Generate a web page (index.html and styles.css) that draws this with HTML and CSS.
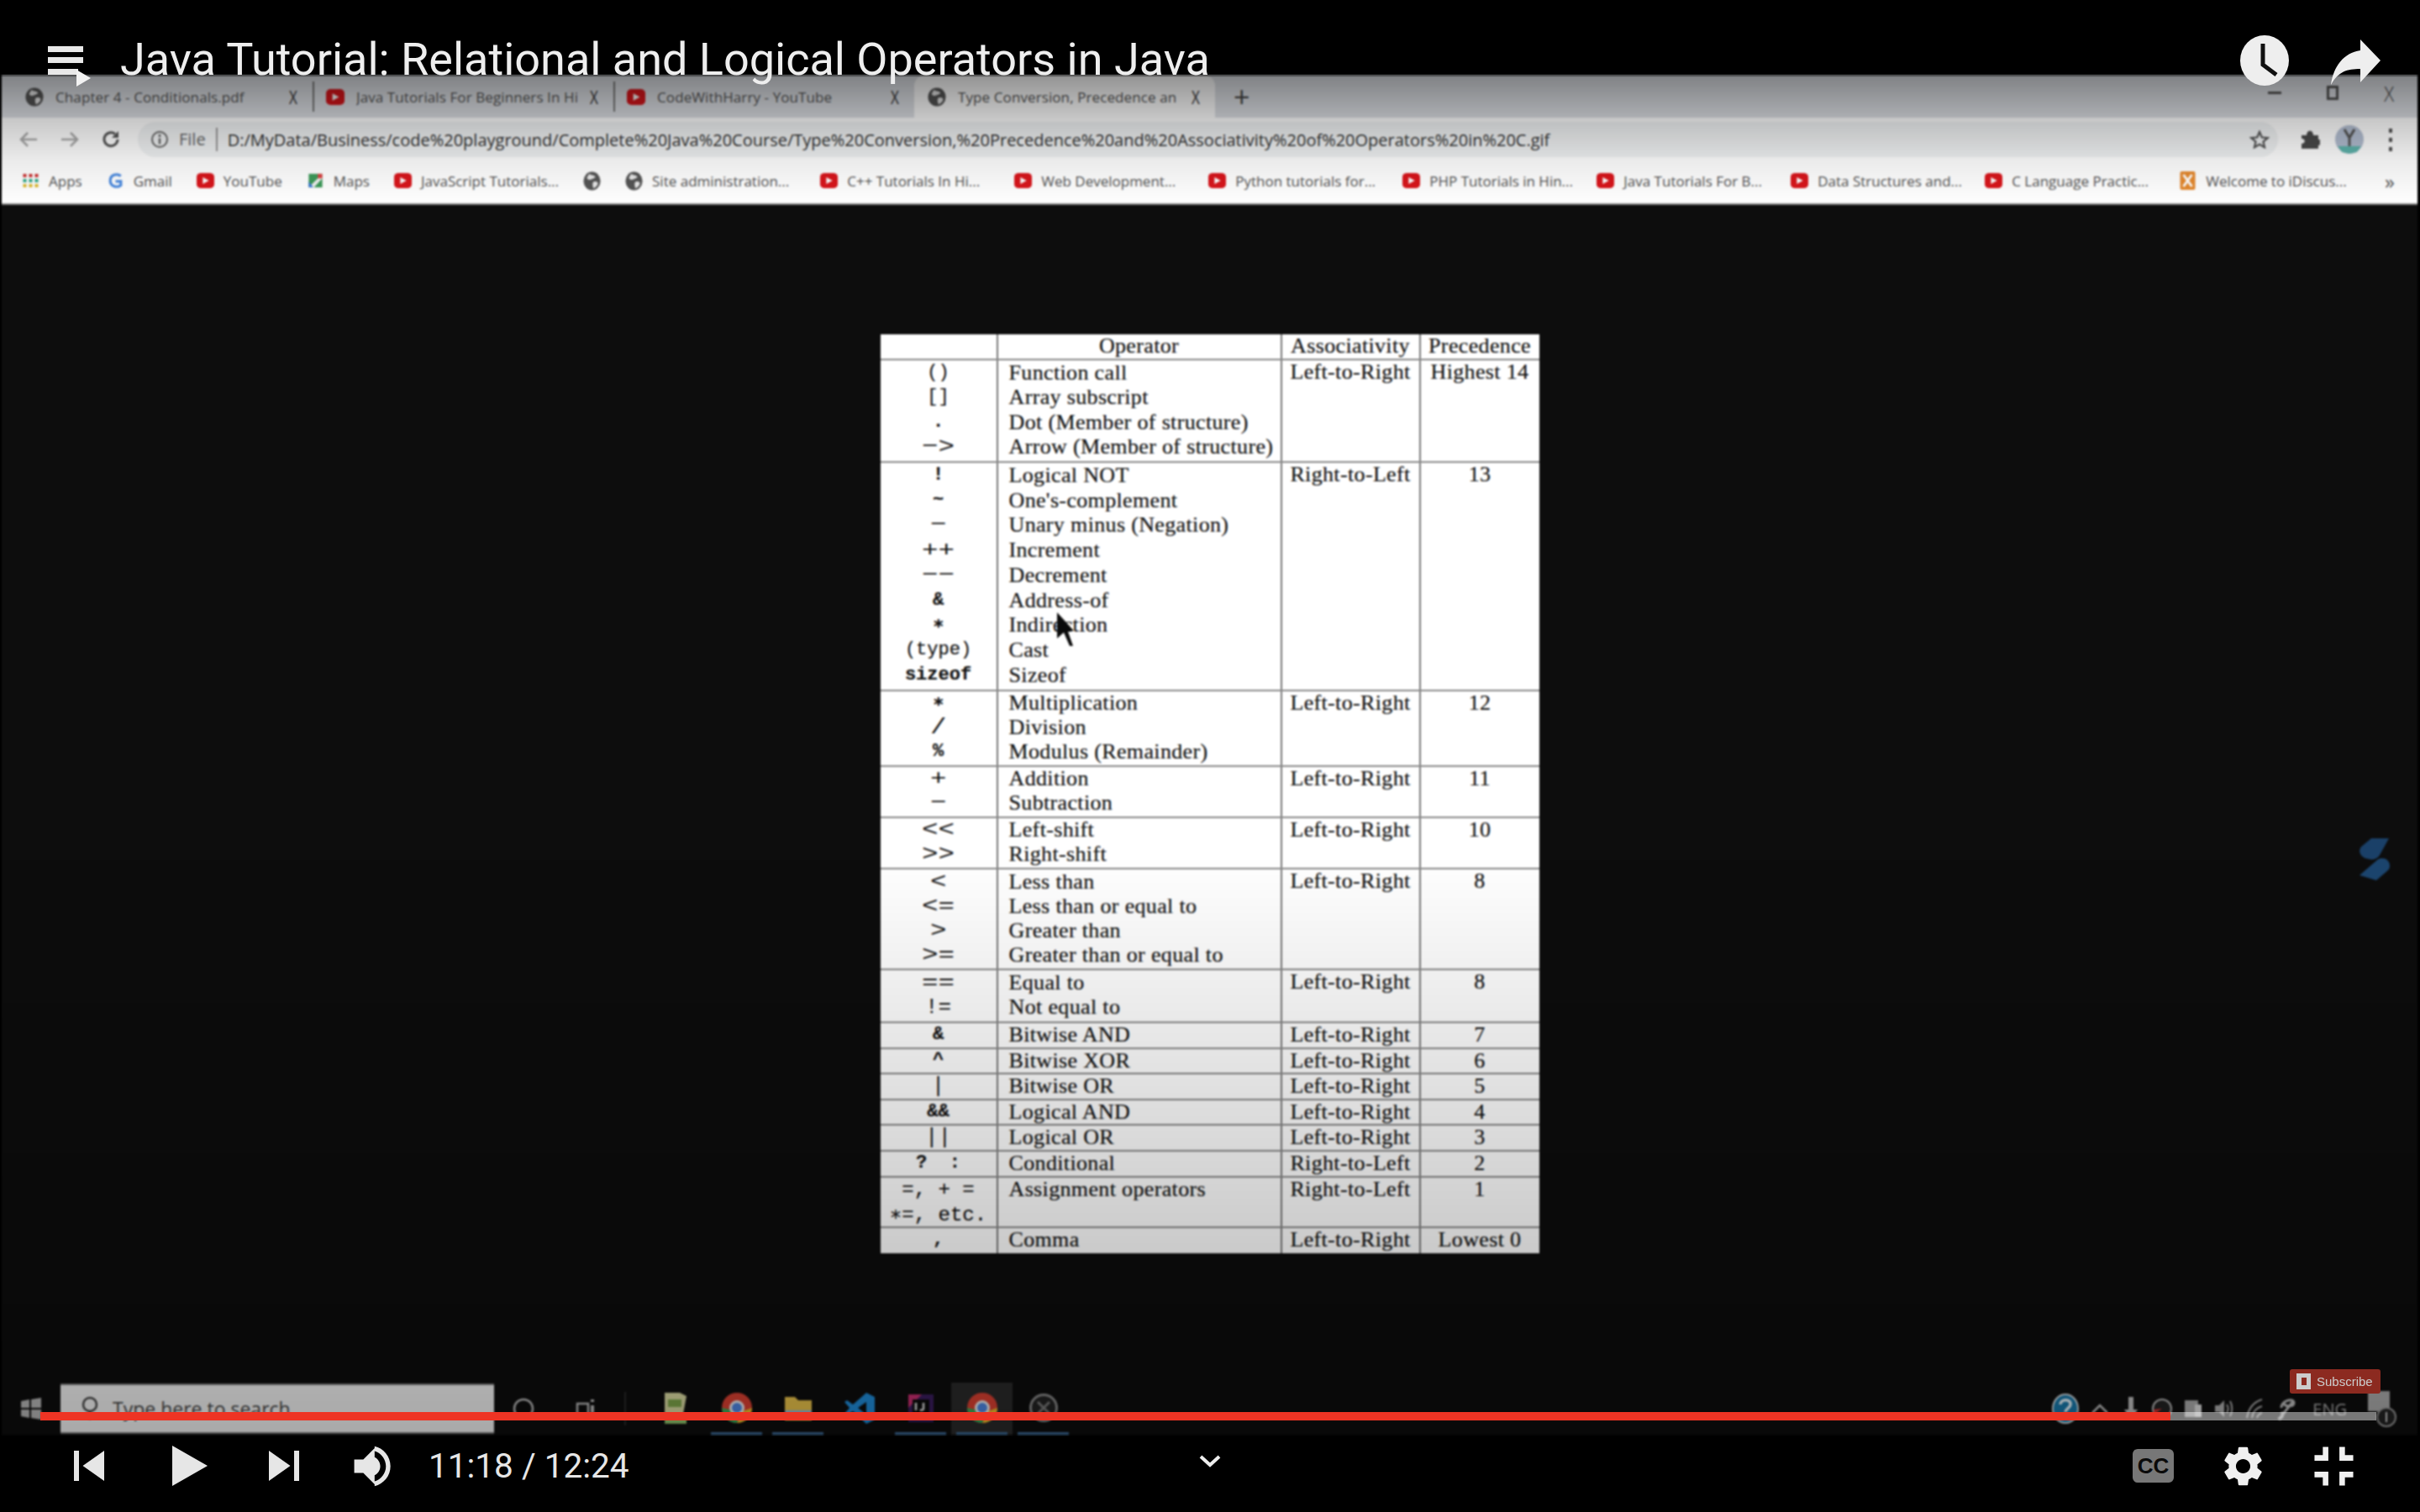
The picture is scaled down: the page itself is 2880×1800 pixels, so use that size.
FILE: index.html
```html
<!DOCTYPE html>
<html lang="en">
<head>
<meta charset="utf-8">
<title>Java Tutorial: Relational and Logical Operators in Java</title>
<link rel="stylesheet" href="styles.css">
</head>
<body>
<svg class="defs" width="0" height="0" aria-hidden="true">
  <symbol id="yt" viewBox="0 0 20 20" preserveAspectRatio="none"><rect x="0" y="0" width="20" height="20" rx="5" fill="#d9161c"/><path d="M7 5.500l7 4.500-7 4.500z" fill="#fff"/></symbol>
  <symbol id="globe" viewBox="0 0 24 24" preserveAspectRatio="none"><circle cx="12" cy="12" r="11.500" fill="#555"/><path d="M8 3c3 2 6 1 8 3s-3 3-5 4-5 0-6-2zM14 13c3-1 6 0 6 2s-3 5-6 6c-1-3-2-6 0-8z" fill="#e8e8e8"/></symbol>
</svg>
<main class="player">
  <div class="top-gap"></div>
  <section class="video">
    <div class="browser">
      <div class="tabs">
        <div class="tab"><svg class="fav"><use href="#globe"/></svg><span class="tab-text">Chapter 4 - Conditionals.pdf</span><span class="tab-x">X</span></div>
        <div class="tab sep"><svg class="fav fav-yt"><use href="#yt"/></svg><span class="tab-text">Java Tutorials For Beginners In Hi</span><span class="tab-x">X</span></div>
        <div class="tab sep"><svg class="fav fav-yt"><use href="#yt"/></svg><span class="tab-text">CodeWithHarry - YouTube</span><span class="tab-x">X</span></div>
        <div class="tab active"><svg class="fav"><use href="#globe"/></svg><span class="tab-text">Type Conversion, Precedence an</span><span class="tab-x">X</span></div>
        <span class="new-tab">+</span>
        <div class="win-btns"><span class="win-min"></span><span class="win-max"></span><span class="win-x">X</span></div>
      </div>
      <div class="toolbar">
        <svg class="nav-ico" viewBox="0 0 24 20"><path d="M22 10H4M11 2l-8 8 8 8" fill="none" stroke="#aaa" stroke-width="2.500"/></svg>
        <svg class="nav-ico" viewBox="0 0 24 20"><path d="M2 10h18M13 2l8 8-8 8" fill="none" stroke="#aaa" stroke-width="2.500"/></svg>
        <svg class="nav-ico" viewBox="0 0 24 20"><path d="M20 10a8 8 0 1 1-3-6.500" fill="none" stroke="#555" stroke-width="3"/><path d="M21 0v8h-8z" fill="#555"/></svg>
        <div class="omni">
          <svg class="info" viewBox="0 0 22 20"><circle cx="11" cy="10" r="9" fill="none" stroke="#666" stroke-width="2"/><path d="M11 8.500v7M11 4v3" stroke="#666" stroke-width="2.500"/></svg>
          <span class="file">File</span>
          <span class="url">D:/MyData/Business/code%20playground/Complete%20Java%20Course/Type%20Conversion,%20Precedence%20and%20Associativity%20of%20Operators%20in%20C.gif</span>
          <svg class="star" viewBox="0 0 24 22"><path d="M12 2l2.800 6.500 7 .6-5.300 4.500 1.600 6.900-6.100-3.600-6.100 3.600 1.600-6.900L2.200 9.100l7-.6z" fill="none" stroke="#555" stroke-width="2.200"/></svg>
        </div>
        <svg class="puzzle" viewBox="0 0 24 22"><path d="M2 6h6c0-7 8-7 8 0h6v5c5 0 5 7 0 7v4H2v-6c5 0 5-6 0-6z" fill="#4a4a4a"/></svg>
        <svg class="avatar" viewBox="0 0 34 34"><circle cx="17" cy="17" r="17" fill="#b4bfd2"/><path d="M3 25h28l-5 7-9 2-9-2z" fill="#5fb4ac"/><path d="M11 5l6 10 6-10M17 15v10" stroke="#555" stroke-width="3" fill="none"/></svg>
        <span class="dots"><i></i><i></i><i></i></span>
      </div>
      <div class="bookmarks">
        <div class="bm"><svg class="bm-ico" viewBox="0 0 20 18"><path d="M1 1h4v4H1zM8 1h4v4H8zM15 1h4v4h-4z" fill="#c33"/><path d="M1 7h4v4H1zM8 7h4v4H8zM15 7h4v4h-4z" fill="#3a8"/><path d="M1 13h4v4H1zM8 13h4v4H8zM15 13h4v4h-4z" fill="#db3"/></svg><span>Apps</span></div>
        <div class="bm"><svg class="bm-ico" viewBox="0 0 20 20"><path d="M17 4C12 0 3 2 3 10s9 10 14 6v-5h-7" fill="none" stroke="#4a8ae0" stroke-width="3.500"/></svg><span>Gmail</span></div>
        <div class="bm"><svg class="bm-ico"><use href="#yt"/></svg><span>YouTube</span></div>
        <div class="bm"><svg class="bm-ico" viewBox="0 0 20 20"><path d="M1 1h18v18H1z" fill="#3d9a5a"/><path d="M1 19L19 1v6L8 19z" fill="#f0f0f0"/><path d="M13 1h6v6h-6z" fill="#d44"/><path d="M1 11l6 8H1z" fill="#3c78d8"/></svg><span>Maps</span></div>
        <div class="bm"><svg class="bm-ico"><use href="#yt"/></svg><span>JavaScript Tutorials...</span></div>
        <div class="bm"><svg class="bm-ico bm-globe"><use href="#globe"/></svg></div>
        <div class="bm bm-site"><svg class="bm-ico bm-globe"><use href="#globe"/></svg><span>Site administration...</span></div>
        <div class="bm bm-w"><svg class="bm-ico"><use href="#yt"/></svg><span>C++ Tutorials In Hi...</span></div>
        <div class="bm bm-w"><svg class="bm-ico"><use href="#yt"/></svg><span>Web Development...</span></div>
        <div class="bm bm-w"><svg class="bm-ico"><use href="#yt"/></svg><span>Python tutorials for...</span></div>
        <div class="bm bm-w"><svg class="bm-ico"><use href="#yt"/></svg><span>PHP Tutorials in Hin...</span></div>
        <div class="bm bm-w"><svg class="bm-ico"><use href="#yt"/></svg><span>Java Tutorials For B...</span></div>
        <div class="bm bm-w"><svg class="bm-ico"><use href="#yt"/></svg><span>Data Structures and...</span></div>
        <div class="bm bm-w"><svg class="bm-ico"><use href="#yt"/></svg><span>C Language Practic...</span></div>
        <div class="bm"><svg class="bm-ico bm-x" viewBox="0 0 20 24"><rect x="1" y="1" width="18" height="22" rx="2" fill="#e58a30"/><path d="M5 5l10 14M15 5L5 19" stroke="#fff" stroke-width="3"/></svg><span>Welcome to iDiscus...</span></div>
        <span class="more">»</span>
      </div>
    </div>
    <div class="page">
      <div class="optable">
        <div class="grp"><div class="c"></div><div class="c c-mid">Operator</div><div class="c c-mid">Associativity</div><div class="c c-mid">Precedence</div></div>
        <div class="grp"><div class="c c-op"><span>()</span><span>[]</span><span class="b">.</span><span class="big">−&gt;</span></div><div class="c"><span>Function call</span><span>Array subscript</span><span>Dot (Member of structure)</span><span>Arrow (Member of structure)</span></div><div class="c c-top c-mid">Left-to-Right</div><div class="c c-top c-mid">Highest 14</div></div>
        <div class="grp"><div class="c c-op"><span class="b">!</span><span class="b">~</span><span class="big">−</span><span class="big">++</span><span class="big">−−</span><span class="b">&amp;</span><span class="b">∗</span><span>(type)</span><span class="b">sizeof</span></div><div class="c"><span>Logical NOT</span><span>One's-complement</span><span>Unary minus (Negation)</span><span>Increment</span><span>Decrement</span><span>Address-of</span><span>Indirection</span><span>Cast</span><span>Sizeof</span></div><div class="c c-top c-mid">Right-to-Left</div><div class="c c-top c-mid">13</div></div>
        <div class="grp"><div class="c c-op"><span class="b">∗</span><span class="big">/</span><span class="b">%</span></div><div class="c"><span>Multiplication</span><span>Division</span><span>Modulus (Remainder)</span></div><div class="c c-top c-mid">Left-to-Right</div><div class="c c-top c-mid">12</div></div>
        <div class="grp"><div class="c c-op"><span class="big">+</span><span class="big">−</span></div><div class="c"><span>Addition</span><span>Subtraction</span></div><div class="c c-top c-mid">Left-to-Right</div><div class="c c-top c-mid">11</div></div>
        <div class="grp"><div class="c c-op"><span class="big">&lt;&lt;</span><span class="big">&gt;&gt;</span></div><div class="c"><span>Left-shift</span><span>Right-shift</span></div><div class="c c-top c-mid">Left-to-Right</div><div class="c c-top c-mid">10</div></div>
        <div class="grp"><div class="c c-op"><span class="big">&lt;</span><span class="big">&lt;=</span><span class="big">&gt;</span><span class="big">&gt;=</span></div><div class="c"><span>Less than</span><span>Less than or equal to</span><span>Greater than</span><span>Greater than or equal to</span></div><div class="c c-top c-mid">Left-to-Right</div><div class="c c-top c-mid">8</div></div>
        <div class="grp"><div class="c c-op"><span class="big">==</span><span class="mid">!=</span></div><div class="c"><span>Equal to</span><span>Not equal to</span></div><div class="c c-top c-mid">Left-to-Right</div><div class="c c-top c-mid">8</div></div>
        <div class="grp"><div class="c c-op"><span class="b">&amp;</span></div><div class="c"><span>Bitwise AND</span></div><div class="c c-top c-mid">Left-to-Right</div><div class="c c-top c-mid">7</div></div>
        <div class="grp"><div class="c c-op"><span class="b">^</span></div><div class="c"><span>Bitwise XOR</span></div><div class="c c-top c-mid">Left-to-Right</div><div class="c c-top c-mid">6</div></div>
        <div class="grp"><div class="c c-op"><span class="mid">|</span></div><div class="c"><span>Bitwise OR</span></div><div class="c c-top c-mid">Left-to-Right</div><div class="c c-top c-mid">5</div></div>
        <div class="grp"><div class="c c-op"><span class="b">&amp;&amp;</span></div><div class="c"><span>Logical AND</span></div><div class="c c-top c-mid">Left-to-Right</div><div class="c c-top c-mid">4</div></div>
        <div class="grp"><div class="c c-op"><span class="mid">||</span></div><div class="c"><span>Logical OR</span></div><div class="c c-top c-mid">Left-to-Right</div><div class="c c-top c-mid">3</div></div>
        <div class="grp"><div class="c c-op"><span class="b">?&nbsp;&nbsp;:</span></div><div class="c"><span>Conditional</span></div><div class="c c-top c-mid">Right-to-Left</div><div class="c c-top c-mid">2</div></div>
        <div class="grp"><div class="c c-op"><span class="wide">=, + =</span><span class="wide">∗=, etc.</span></div><div class="c c-top"><span>Assignment operators</span></div><div class="c c-top c-mid">Right-to-Left</div><div class="c c-top c-mid">1</div></div>
        <div class="grp"><div class="c c-op"><span class="b">,</span></div><div class="c"><span>Comma</span></div><div class="c c-top c-mid">Left-to-Right</div><div class="c c-top c-mid">Lowest 0</div></div>
      </div>
      <svg class="cursor" viewBox="0 0 20 40"><path d="M0 0l20 22-7 1 6 17-4 0-7-16-8 7z" fill="#0a0a0a"/></svg>
      <svg class="ext-logo" viewBox="0 0 36 50"><path d="M14 0h21L24 20c-4 6-10 6-16 4C1 22-2 15 2 10z" fill="#1d4a78"/><path d="M22 25c6-3 14 0 14 8 0 2-1 4-2 5L20 50 0 44z" fill="#1f4f80"/></svg>
    </div>
    <div class="taskbar">
      <svg class="winlogo" viewBox="0 0 26 26"><path d="M1 4l10-2v10H1zM13 2l12-2v12H13zM1 14h10v10L1 22zM13 14h12v12l-12-2z" fill="#b5b5b5"/></svg>
      <div class="search"><svg class="search-ico" viewBox="0 0 22 30"><circle cx="11" cy="10" r="8" fill="none" stroke="#444" stroke-width="2.500"/><path d="M11 18v10" stroke="#444" stroke-width="2.500"/></svg><span>Type here to search</span></div>
      <svg class="cortana" viewBox="0 0 26 26"><circle cx="13" cy="13" r="11" fill="none" stroke="#b8b8b8" stroke-width="2.500"/></svg>
      <svg class="taskview" viewBox="0 0 28 30"><path d="M4 9h13v13H4z" fill="none" stroke="#b8b8b8" stroke-width="2.500"/><path d="M22 4v3M22 11v9M22 24v3" stroke="#b8b8b8" stroke-width="4"/></svg>
      <span class="tb-div"></span>
      <div class="tb-app"><svg class="a-note" viewBox="0 0 30 38"><path d="M2 1h18l8 4-6 32H2z" fill="#d8d8a0"/><path d="M6 9h16v9H6z" fill="#7da54a"/><path d="M2 30h26v8H2z" fill="#8fbf6a"/></svg></div>
      <div class="tb-app open"><svg class="a-chrome" viewBox="0 0 36 36"><circle cx="18" cy="18" r="18" fill="#d94032"/><path d="M0 18c0 10 8 18 18 18l4-13z" fill="#3ba856"/><path d="M36 18c0 10-8 18-18 18l7-14z" fill="#eebc2c"/><circle cx="18" cy="18" r="7.500" fill="#4d85e0" stroke="#eee" stroke-width="3"/></svg></div>
      <div class="tb-app open"><svg class="a-folder" viewBox="0 0 32 30"><path d="M0 2h12l4 4h16v24H0z" fill="#e6c04a"/><path d="M0 18h32v7H0z" fill="#8fb7d8"/></svg></div>
      <div class="tb-app"><svg class="a-code" viewBox="0 0 36 37"><path d="M26 0l10 5v27l-10 5L10 22l-7 5-3-2 6-7-6-7 3-2 7 5zm0 11l-10 7 10 8z" fill="#1f8ad6"/></svg></div>
      <div class="tb-app open"><svg class="a-idea" viewBox="0 0 30 33"><rect width="30" height="33" fill="#3a1d5c"/><path d="M0 0h16L0 16z" fill="#c52d6e"/><path d="M5 6h20v22H5z" fill="#0b0b0b"/><path d="M9 10v9M18 10v7c0 2-3 2-4 1" stroke="#ddd" stroke-width="2.500" fill="none"/></svg></div>
      <div class="tb-app open active"><svg class="a-chrome" viewBox="0 0 36 36"><circle cx="18" cy="18" r="18" fill="#d94032"/><path d="M0 18c0 10 8 18 18 18l4-13z" fill="#3ba856"/><path d="M36 18c0 10-8 18-18 18l7-14z" fill="#eebc2c"/><circle cx="18" cy="18" r="7.500" fill="#4d85e0" stroke="#eee" stroke-width="3"/></svg></div>
      <div class="tb-app open"><svg class="a-obs" viewBox="0 0 34 34"><circle cx="17" cy="17" r="15.500" fill="#222" stroke="#888" stroke-width="3"/><path d="M10 10l14 14M24 10L10 24" stroke="#777" stroke-width="3"/></svg></div>
      <div class="tray">
        <svg class="tray-help" viewBox="0 0 32 36"><ellipse cx="16" cy="18" rx="15" ry="17" fill="#1877a8" stroke="#cfd8dc" stroke-width="2"/><path d="M10 13c0-7 13-7 12 0 0 4-6 5-6 9M16 25v3" fill="none" stroke="#e8f4fa" stroke-width="3.500"/></svg>
        <svg class="tray-ico" viewBox="0 0 24 30"><path d="M3 20l9-9 9 9" fill="none" stroke="#bbb" stroke-width="2.500"/></svg>
        <svg class="tray-ico" viewBox="0 0 24 30"><path d="M9 1h6v15h5L12 28 4 16h5z" fill="#bbb"/></svg>
        <svg class="tray-ico" viewBox="0 0 24 30"><circle cx="12" cy="15" r="11" fill="#222" stroke="#bbb" stroke-width="2"/><path d="M12 15L2 22v-6z" fill="#c33"/></svg>
        <svg class="tray-ico" viewBox="0 0 24 30"><path d="M2 5h16v20H2z" fill="#aaa"/><path d="M14 10h8v15h-8z" fill="#ddd"/></svg>
        <svg class="tray-ico" viewBox="0 0 24 30"><path d="M1 11h5l6-6v20l-6-6H1z" fill="#aaa"/><path d="M15 10c2 3 2 7 0 10M19 6c3 5 3 13 0 18" fill="none" stroke="#aaa" stroke-width="2"/></svg>
        <svg class="tray-ico" viewBox="0 0 24 30"><path d="M2 26C4 14 10 7 20 4M8 26c1-8 5-12 12-14M14 26c1-4 3-5 6-6" fill="none" stroke="#aaa" stroke-width="2"/></svg>
        <svg class="tray-ico" viewBox="0 0 24 30"><path d="M3 28L20 6M6 14c0-8 14-13 15-6 0 5-10 5-12 1M6 19c4 6-2 9-3 6" fill="none" stroke="#bbb" stroke-width="3"/></svg>
        <span class="lang">ENG</span>
        <svg class="tray-note" viewBox="0 0 36 46"><path d="M2 2h26v24H2z" fill="#aaa"/><circle cx="24" cy="33" r="11" fill="#222" stroke="#999" stroke-width="2"/><path d="M24 27v12" stroke="#ccc" stroke-width="2"/></svg>
      </div>
    </div>
  </section>
  <footer class="controls">
    <button class="ctl ctl-prev"><svg viewBox="0 0 36 36"><path d="M12 12h2v12h-2zm3.500 6 8.500 6V12z"/></svg></button>
    <button class="ctl ctl-play"><svg viewBox="0 0 36 36"><path d="M12 26 26 18 12 10z"/></svg></button>
    <button class="ctl ctl-next"><svg viewBox="0 0 36 36"><path d="M12 24l8.500-6L12 12v12zm10-12v12h2V12h-2z"/></svg></button>
    <button class="ctl ctl-vol"><svg viewBox="0 0 36 36"><path d="M8 21h4l5 5V10l-5 5H8v6zm11.500-3c0-1.770-1.020-3.290-2.500-4.030v8.050c1.480-.73 2.500-2.250 2.500-4.020zM17 9.230v2.060c2.890.86 5 3.540 5 6.710s-2.110 5.850-5 6.710v2.060c4.010-.91 7-4.490 7-8.770 0-4.280-2.990-7.860-7-8.770z"/></svg></button>
    <span class="time">11:18 / 12:24</span>
    <span class="spacer"></span>
    <span class="cc">CC</span>
    <button class="ctl ctl-gear"><svg viewBox="0 0 24 24"><path d="M19.140 12.940c.04-.3.06-.61.06-.94 0-.32-.02-.64-.07-.94l2.030-1.580c.18-.14.23-.41.12-.61l-1.920-3.320c-.12-.22-.37-.29-.59-.22l-2.390.96c-.5-.38-1.030-.7-1.620-.94l-.36-2.540c-.04-.24-.24-.41-.48-.41h-3.840c-.24 0-.43.17-.47.41l-.36 2.540c-.59.24-1.130.57-1.620.94l-2.390-.96c-.22-.08-.47 0-.59.22L2.740 8.870c-.12.21-.08.47.12.61l2.030 1.580c-.05.3-.09.63-.09.94s.02.64.07.94l-2.030 1.580c-.18.14-.23.41-.12.61l1.920 3.320c.12.22.37.29.59.22l2.390-.96c.5.38 1.030.7 1.620.94l.36 2.540c.05.24.24.41.48.41h3.840c.24 0 .44-.17.47-.41l.36-2.540c.59-.24 1.130-.56 1.620-.94l2.390.96c.22.08.47 0 .59-.22l1.920-3.320c.12-.22.07-.47-.12-.61l-2.010-1.580zM12 15.600c-1.980 0-3.600-1.620-3.600-3.600s1.620-3.600 3.600-3.600 3.600 1.620 3.600 3.600-1.620 3.600-3.600 3.600z"/></svg></button>
    <button class="ctl ctl-fs"><svg viewBox="0 0 24 24"><path d="M5 16h3v3h2v-5H5v2zm3-8H5v2h5V5H8v3zm6 11h2v-3h3v-2h-5v5zm2-11V5h-2v5h5V8h-3z"/></svg></button>
  </footer>

  <div class="scrim-top"></div>
  <div class="scrim-bottom"></div>
  <div class="subscribe"><span class="sub-ico"></span>Subscribe</div>
  <div class="progress"><div class="progress-played"></div></div>
  <svg class="chevron" viewBox="0 0 28 16"><path d="M3 3l11 10L25 3" fill="none" stroke="#eee" stroke-width="4"/></svg>
  <svg class="menu" viewBox="0 0 52 50"><path d="M0 0h42v7H0zM0 13h42v7H0zM0 27h36v7H0z" fill="#e8e8e8"/><path d="M34 28l17 10-17 10z" fill="#f2f2f2"/></svg>
  <h1 class="title">Java Tutorial: Relational and Logical Operators in Java</h1>
  <svg class="clock" viewBox="0 0 58 60"><ellipse cx="29" cy="30" rx="29" ry="30" fill="#eee"/><path d="M27 10v25l16 12" fill="none" stroke="#111" stroke-width="5"/></svg>
  <svg class="share" viewBox="0 0 60 56"><path d="M36 0l24 25-24 26V35C20 35 10 38 1 54 4 32 16 16 36 13z" fill="#eee"/></svg>
</main>
</body>
</html>
```
FILE: styles.css
```css
* { box-sizing: border-box; }
html, body { margin: 0; padding: 0; background: #000; }
body { width: 2880px; height: 1800px; overflow: hidden; }
.defs { position: absolute; }
.player { position: relative; width: 2880px; height: 1800px; display: flex; flex-direction: column; background: #000; overflow: hidden; }
.top-gap { height: 90px; flex: none; }

.video { height: 1618px; flex: none; margin: 0 3px 0 2px; background: #0d0d0d; display: flex; flex-direction: column; filter: blur(.8px); font-family: "Open Sans", "Liberation Sans", sans-serif; }

.browser { flex: none; height: 154px; background: #fff; border-bottom: 2px solid #888; display: flex; flex-direction: column; }
.tabs { height: 50px; flex: none; background: #dee1e6; display: flex; align-items: center; padding-left: 12px; color: #555; font-size: 17px; }
.tab { width: 358px; height: 50px; display: flex; align-items: center; padding-left: 16px; flex: none; }
.tab.sep { height: 36px; border-left: 2px solid #777; padding-left: 14px; }
.tab.active { background: #fff; border-radius: 12px 12px 0 0; }
.fav { width: 22px; height: 23px; flex: none; margin-right: 14px; }
.fav-yt { height: 19px; }
.tab-text { width: 263px; white-space: nowrap; overflow: hidden; letter-spacing: .1px; }
.tab-x { margin-left: 15px; font-size: 17px; color: #333; transform: scaleY(1.3); }
.new-tab { font-size: 34px; color: #444; margin-left: 22px; line-height: 1; }
.win-btns { margin-left: auto; display: flex; align-items: center; gap: 54px; padding: 0 28px 10px 0; color: #444; }
.win-min { width: 16px; height: 3px; background: #555; }
.win-max { width: 14px; height: 17px; border: 3px solid #555; }
.win-x { font-size: 22px; font-weight: 300; transform: scaleY(1.2); }

.toolbar { height: 52px; flex: none; display: flex; align-items: center; padding-left: 20px; }
.nav-ico { width: 24px; height: 20px; flex: none; margin-right: 25px; }
.nav-ico:nth-child(3) { margin-right: 20px; }
.omni { width: 2547px; height: 42px; background: #f1f3f4; border-radius: 21px; display: flex; align-items: center; padding-left: 15px; flex: none; }
.info { width: 22px; height: 20px; flex: none; margin-right: 12px; }
.file { color: #666; font-size: 20px; padding-right: 12px; border-right: 2px solid #999; margin-right: 12px; line-height: 28px; }
.url { color: #333; font-size: 20px; white-space: nowrap; }
.star { width: 24px; height: 22px; margin-left: auto; margin-right: 10px; flex: none; }
.puzzle { width: 24px; height: 22px; margin-left: 26px; flex: none; }
.avatar { width: 34px; height: 34px; margin-left: 18px; flex: none; }
.dots { display: flex; flex-direction: column; gap: 6px; margin-left: 30px; }
.dots i { display: block; width: 4px; height: 5px; background: #555; }

.bookmarks { flex: 1; display: flex; align-items: center; padding: 0 0 4px 24px; font-size: 17px; color: #555; gap: 29px; }
.bm { display: flex; align-items: center; gap: 11px; white-space: nowrap; flex: none; }
.bm-site { margin-right: 8px; }
.bm-w { width: 202px; }
.bm-ico { width: 21px; height: 18px; flex: none; }
.bm-globe { height: 23px; }
.bm-x { height: 24px; }
.more { margin-left: auto; margin-right: 27px; font-size: 24px; }

.page { flex: 1; position: relative; padding-top: 154px; display: flex; justify-content: center; align-items: flex-start; }
.optable { width: 784px; height: 1094px; background: #fff; display: grid; grid-template-rows: 29px 122px 272px 90px 61px 61px 120px 63px 31px 30px 31px 30px 31px 31px 60px 31px; font-family: "Liberation Serif", serif; font-size: 26px; letter-spacing: .35px; color: #111; -webkit-text-stroke: .2px #111; }
.grp { display: grid; grid-template-columns: 138px 338px 165px 143px; border-top: 2px solid #888; min-height: 0; }
.grp:first-child { border-top: 0; }
.c { display: flex; flex-direction: column; justify-content: space-around; padding: 0 0 2px 13px; border-left: 2px solid #777; white-space: nowrap; line-height: 28px; }
.c:first-child { border-left: 0; }
.c-mid { align-items: center; padding-left: 0; }
.c-top { justify-content: flex-start; }
.c-op { align-items: center; padding-left: 0; font-family: "Liberation Mono", monospace; font-size: 22px; letter-spacing: 0; }
.big { font-size: 26px; letter-spacing: 0; -webkit-text-stroke: 0; transform: scaleX(1.25); }
.mid { font-size: 26px; -webkit-text-stroke: 0; }
.b { font-weight: 700; }
.wide { font-size: 24px; line-height: 30px; }
.cursor { position: absolute; left: 1256px; top: 485px; width: 20px; height: 40px; }
.ext-logo { position: absolute; left: 2806px; top: 754px; width: 36px; height: 50px; opacity: .85; }

.taskbar { flex: none; height: 62px; display: flex; align-items: center; position: relative; filter: blur(.6px); }
.winlogo { width: 26px; height: 26px; margin-left: 22px; flex: none; }
.search { width: 516px; height: 60px; margin-left: 22px; background: #f2f2f2; border-top: 2px solid #777; border-bottom: 2px solid #777; display: flex; align-items: center; padding-left: 24px; gap: 16px; font-size: 23px; color: #444; flex: none; }
.search-ico { width: 22px; height: 30px; flex: none; }
.cortana { width: 26px; height: 26px; margin-left: 22px; flex: none; }
.taskview { width: 28px; height: 30px; margin-left: 47px; flex: none; }
.tb-div { width: 2px; height: 40px; background: #2a2a2a; margin-left: 32px; margin-right: 22px; flex: none; }
.tb-app { width: 73px; height: 62px; display: flex; align-items: center; justify-content: center; position: relative; flex: none; padding-bottom: 2px; }
.a-note { width: 32px; height: 38px; }
.a-chrome { width: 36px; height: 36px; }
.a-folder { width: 32px; height: 30px; }
.a-code { width: 36px; height: 37px; }
.a-idea { width: 30px; height: 33px; }
.a-obs { width: 34px; height: 34px; }
.tb-app.open::after { content: ""; position: absolute; left: 6px; right: 6px; bottom: 0; height: 3px; background: #3d6a96; }
.tb-app.active { background: #2a2a2a; }
.tray { margin-left: auto; display: flex; align-items: center; gap: 13px; padding-right: 25px; color: #aaa; }
.tray-help { width: 32px; height: 36px; }
.tray-ico { width: 24px; height: 30px; flex: none; }
.lang { font-size: 20px; margin-left: 6px; }
.tray-note { width: 36px; height: 46px; margin-left: 10px; }

.controls { flex: none; height: 92px; padding: 0 0 18px 52px; display: flex; align-items: center; color: #e6e6e6; }
.ctl { border: 0; padding: 0; background: none; flex: none; display: block; height: 108px; width: 108px; }
.ctl svg { display: block; width: 100%; height: 100%; fill: #e6e6e6; }
.ctl-play { margin-left: 9px; }
.ctl-next { margin-left: 7px; }
.ctl-vol { width: 97px; height: 97px; margin-left: 8px; }
.time { font-family: Roboto, sans-serif; font-size: 40.500px; margin-left: 13px; }
.spacer { flex: 1; }
.cc { width: 49px; height: 40px; background: #777; border-radius: 6px; color: #0a0a0a; font: 700 26px "Liberation Sans", sans-serif; display: flex; align-items: center; justify-content: center; flex: none; }
.ctl-gear { width: 57px; height: 57px; margin-left: 54px; }
.ctl-gear svg, .ctl-fs svg { fill: #f0f0f0; }
.ctl-fs { width: 79px; height: 79px; margin-left: 40px; margin-right: 63px; }

.scrim-top { position: absolute; left: 0; right: 0; top: 90px; height: 155px; background: linear-gradient(to bottom, rgba(0,0,0,.42), rgba(0,0,0,.22) 33%, rgba(0,0,0,.08) 65%, rgba(0,0,0,0)); }
.scrim-bottom { position: absolute; left: 0; right: 0; top: 1020px; height: 688px; background: linear-gradient(to bottom, rgba(0,0,0,0), rgba(0,0,0,.3)); }
.subscribe { position: absolute; left: 2725px; top: 1630px; width: 108px; height: 29px; background: #8c2a20; border-radius: 3px; display: flex; align-items: center; padding-left: 8px; gap: 7px; font: 15px "Liberation Sans", sans-serif; color: #ccc; filter: blur(.5px); }
.sub-ico { width: 17px; height: 19px; background: linear-gradient(to right, #8c2a20 0 0) no-repeat 6px 5px / 6px 9px, #ccc; flex: none; }
.progress { position: absolute; left: 48px; top: 1681px; width: 2780px; height: 10px; background: rgba(255,255,255,.45); }
.progress-played { width: 2535px; height: 100%; background: #ee3424; }
.chevron { position: absolute; left: 1426px; top: 1731px; width: 28px; height: 16px; }
.menu { position: absolute; left: 57px; top: 55px; width: 52px; height: 50px; }
.title { position: absolute; left: 143px; top: 39px; margin: 0; font: 400 54px/64px Roboto, sans-serif; color: #eee; white-space: nowrap; }
.clock { position: absolute; left: 2666px; top: 42px; width: 58px; height: 60px; }
.share { position: absolute; left: 2773px; top: 47px; width: 60px; height: 56px; }
```
